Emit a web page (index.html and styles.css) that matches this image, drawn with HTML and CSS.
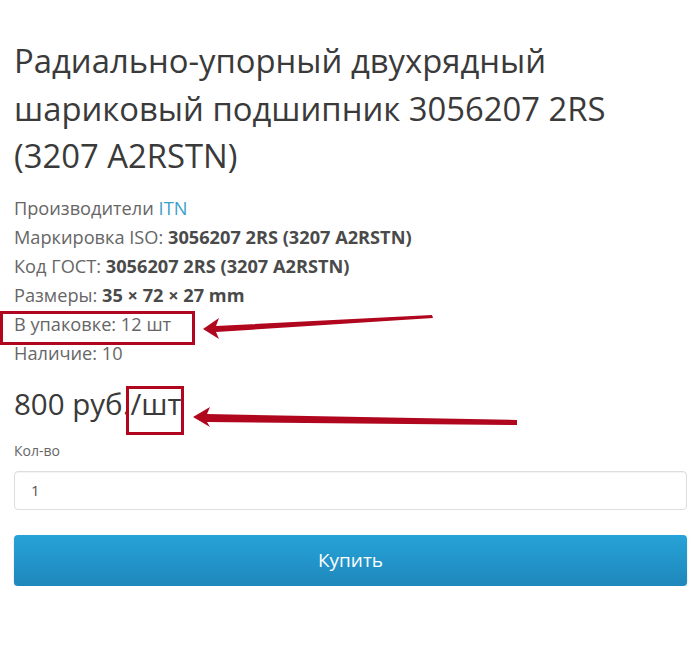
FILE: index.html
```html
<!DOCTYPE html>
<html lang="ru">
<head>
    <meta charset="UTF-8">
    <meta name="viewport" content="width=device-width, initial-scale=1.0">
    <title>Подшипник 3056207 2RS</title>
    <link rel="stylesheet" href="styles.css">
</head>
<body>

<div class="product">
    <h1 class="product-title">Радиально-упорный двухрядный шариковый подшипник 3056207 2RS (3207 A2RSTN)</h1>

    <ul class="specs">
        <li>Производители <a href="#">ITN</a></li>
        <li>Маркировка ISO: <b>3056207 2RS (3207 A2RSTN)</b></li>
        <li>Код ГОСТ: <b>3056207 2RS (3207 A2RSTN)</b></li>
        <li>Размеры: <b>35 × 72 × 27 mm</b></li>
        <li>В упаковке: 12 шт</li>
        <li>Наличие: 10</li>
    </ul>

    <div class="price">800 руб./шт</div>

    <form class="buy-form">
        <label class="qty-label" for="qty">Кол-во</label>
        <input class="qty-input" id="qty" type="text" value="1">
        <button class="buy-btn" type="button">Купить</button>
    </form>
</div>

<!-- red marks over the page -->
<svg class="marks" width="700" height="650" viewBox="0 0 700 650">
    <rect x="1.5" y="312.5" width="192" height="31" fill="none" stroke="#b0071f" stroke-width="3"/>
    <rect x="127.5" y="387.5" width="55" height="46" fill="none" stroke="#b0071f" stroke-width="3"/>
    <polygon fill="#b0071f" points="203,329 219,318 216,326 432,315 433,318 216,332 219,339"/>
    <polygon fill="#b0071f" points="193,417 210,407 207,414 517,420 517,425 207,422 210,427"/>
</svg>

</body>
</html>
```

FILE: styles.css
```css
body {
    font-family: "Open Sans", Arial, sans-serif;
    margin: 0;
    padding: 0 13px 0 14px;
    background-color: #fff;
    color: #333;
}
.product {
    padding-top: 37px;
}
.product-title {
    font-size: 32.8px;
    font-weight: 400;
    line-height: 47.5px;
    margin: 0 0 14px;
    color: #3a3a3a;
    padding-right: 40px;
}
.specs {
    list-style: none;
    margin: 0;
    padding: 0;
    font-size: 18.2px;
    line-height: 29px;
    color: #666;
}
.specs b {
    color: #4a4a4a;
}
.specs a {
    color: #3b9fcb;
    text-decoration: none;
}
.price {
    font-size: 29.5px;
    line-height: 40px;
    margin-top: 16px;
    color: #3a3a3a;
}
.buy-form {
    margin-top: 17px;
}
.qty-label {
    display: block;
    font-size: 14px;
    line-height: 20px;
    color: #666;
    margin-bottom: 10px;
}
.qty-input {
    display: block;
    box-sizing: border-box;
    width: 100%;
    height: 39px;
    padding: 0 16px;
    font-family: "Open Sans", Arial, sans-serif;
    font-size: 15px;
    color: #555;
    border: 1px solid #ddd;
    border-radius: 4px;
    box-shadow: inset 0 1px 1px rgba(0, 0, 0, 0.05);
}
.buy-btn {
    display: block;
    width: 100%;
    height: 51px;
    margin-top: 25px;
    font-family: "Open Sans", Arial, sans-serif;
    font-size: 19px;
    color: #fff;
    background: linear-gradient(#27a3d8, #1e87bb);
    border: none;
    border-radius: 4px;
    box-shadow: 0 1px 2px rgba(0, 0, 0, 0.2);
    cursor: pointer;
}
.marks {
    position: absolute;
    top: 0;
    left: 0;
    pointer-events: none;
}
```
